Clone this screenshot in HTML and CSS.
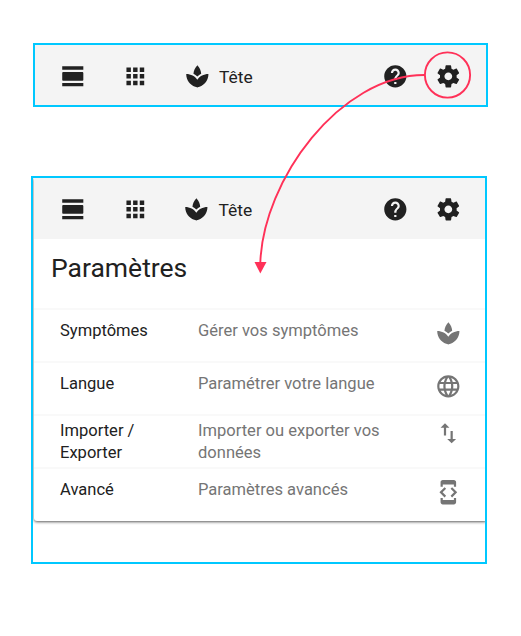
FILE: index.html
```html
<!DOCTYPE html>
<html lang="fr">
<head>
<meta charset="utf-8">
<title>Paramètres</title>
<link rel="stylesheet" href="styles.css">
</head>
<body>
<svg class="sprite" aria-hidden="true">
  <symbol id="day" viewBox="0 0 24 24"><path d="M2 21h19v-3H2v3zM20 8H3c-.55 0-1 .45-1 1v6c0 .55.45 1 1 1h17c.55 0 1-.45 1-1V9c0-.55-.45-1-1-1zM2 3v3h19V3H2z"/></symbol>
  <symbol id="apps" viewBox="0 0 24 24"><path d="M4 8h4V4H4v4zm6 12h4v-4h-4v4zm-6 0h4v-4H4v4zm0-6h4v-4H4v4zm6 0h4v-4h-4v4zm6-10v4h4V4h-4zm-6 4h4V4h-4v4zm6 6h4v-4h-4v4zm0 6h4v-4h-4v4z"/></symbol>
  <symbol id="spa" viewBox="0 0 24 24"><path d="M15.49 9.63c-.18-2.79-1.31-5.51-3.43-7.63-2.14 2.14-3.32 4.86-3.55 7.63 1.28.68 2.46 1.56 3.49 2.63 1.03-1.06 2.21-1.94 3.49-2.63zM12 15.1C9.85 12 6.18 10 2 10c0 5.32 3.36 9.82 8.03 11.49.63.23 1.29.4 1.97.51.68-.12 1.33-.29 1.97-.51C18.64 19.82 22 15.32 22 10c-4.18 0-7.85 2-10 5.1z"/></symbol>
  <symbol id="help" viewBox="0 0 24 24"><path d="M12 2C6.48 2 2 6.48 2 12s4.48 10 10 10 10-4.48 10-10S17.52 2 12 2zm1 17h-2v-2h2v2zm2.07-7.75l-.9.92C13.45 12.9 13 13.5 13 15h-2v-.5c0-1.1.45-2.1 1.17-2.83l1.24-1.26c.37-.36.59-.86.59-1.41 0-1.1-.9-2-2-2s-2 .9-2 2H8c0-2.21 1.79-4 4-4s4 1.79 4 4c0 .88-.36 1.68-.93 2.25z"/></symbol>
  <symbol id="gear" viewBox="0 0 24 24"><path d="M19.43 12.98c.04-.32.07-.64.07-.98s-.03-.66-.07-.98l2.11-1.65c.19-.15.24-.42.12-.64l-2-3.46c-.12-.22-.39-.3-.61-.22l-2.49 1c-.52-.4-1.08-.73-1.69-.98l-.38-2.65C14.46 2.18 14.25 2 14 2h-4c-.25 0-.46.18-.49.42l-.38 2.65c-.61.25-1.17.59-1.69.98l-2.49-1c-.23-.09-.49 0-.61.22l-2 3.46c-.13.22-.07.49.12.64l2.11 1.65c-.04.32-.07.65-.07.98s.03.66.07.98l-2.11 1.65c-.19.15-.24.42-.12.64l2 3.46c.12.22.39.3.61.22l2.49-1c.52.4 1.08.73 1.69.98l.38 2.65c.03.24.24.42.49.42h4c.25 0 .46-.18.49-.42l.38-2.65c.61-.25 1.17-.59 1.69-.98l2.49 1c.23.09.49 0 .61-.22l2-3.46c.12-.22.07-.49-.12-.64l-2.11-1.65zM12 15.5c-1.93 0-3.5-1.57-3.5-3.5s1.57-3.5 3.5-3.5 3.5 1.57 3.5 3.5-1.57 3.5-3.5 3.5z"/></symbol>
  <symbol id="globe" viewBox="0 0 24 24"><path d="M11.99 2C6.47 2 2 6.48 2 12s4.47 10 9.99 10C17.52 22 22 17.52 22 12S17.52 2 11.99 2zm6.93 6h-2.95c-.32-1.25-.78-2.45-1.38-3.56 1.84.63 3.37 1.91 4.33 3.56zM12 4.04c.83 1.2 1.48 2.53 1.91 3.96h-3.82c.43-1.43 1.08-2.76 1.91-3.96zM4.26 14C4.1 13.36 4 12.69 4 12s.1-1.36.26-2h3.38c-.08.66-.14 1.32-.14 2 0 .68.06 1.34.14 2H4.26zm.82 2h2.95c.32 1.25.78 2.45 1.38 3.56-1.84-.63-3.37-1.9-4.33-3.56zm2.95-8H5.08c.96-1.66 2.49-2.93 4.33-3.56C8.81 5.55 8.35 6.75 8.03 8zM12 19.96c-.83-1.2-1.48-2.53-1.91-3.96h3.82c-.43 1.43-1.08 2.76-1.91 3.96zM14.34 14H9.66c-.09-.66-.16-1.32-.16-2 0-.68.07-1.35.16-2h4.68c.09.65.16 1.32.16 2 0 .68-.07 1.34-.16 2zm.25 5.56c.6-1.11 1.06-2.31 1.38-3.56h2.95c-.96 1.65-2.49 2.93-4.33 3.56zM16.36 14c.08-.66.14-1.32.14-2 0-.68-.06-1.34-.14-2h3.38c.16.64.26 1.31.26 2s-.1 1.36-.26 2h-3.38z"/></symbol>
  <symbol id="transfer" viewBox="0 0 24 24"><path d="M9 3L5 6.99h3V14h2V6.99h3L9 3zm7 14.01V10h-2v7.01h-3L15 21l4-3.99h-3z"/></symbol>
  <symbol id="dev" viewBox="0 0 24 24"><path d="M7 5h10v2h2V3c0-1.1-.9-1.99-2-1.99L7 1c-1.1 0-2 .9-2 2v4h2V5zm8.41 11.59L20 12l-4.59-4.59L14 8.83 17.17 12 14 15.17l1.41 1.42zM10 15.17L6.83 12 10 8.83 8.59 7.41 4 12l4.59 4.59L10 15.17zM17 19H7v-2H5v4c0 1.1.9 2 2 2h10c1.1 0 2-.9 2-2v-4h-2v2z"/></symbol>
</svg>

<section class="frame frame-bar">
  <header class="toolbar">
    <svg class="icon"><use href="#day"/></svg>
    <svg class="icon"><use href="#apps"/></svg>
    <span class="zone"><svg class="icon"><use href="#spa"/></svg><span>Tête</span></span>
    <svg class="icon"><use href="#help"/></svg>
    <svg class="icon"><use href="#gear"/></svg>
  </header>
</section>

<section class="frame frame-page">
  <div class="card">
    <header class="toolbar">
      <svg class="icon"><use href="#day"/></svg>
      <svg class="icon"><use href="#apps"/></svg>
      <span class="zone"><svg class="icon"><use href="#spa"/></svg><span>Tête</span></span>
      <svg class="icon"><use href="#help"/></svg>
      <svg class="icon"><use href="#gear"/></svg>
    </header>
    <h1>Paramètres</h1>
    <div class="row"><span>Symptômes</span><span class="desc">Gérer vos symptômes</span><svg class="icon"><use href="#spa"/></svg></div>
    <div class="row"><span>Langue</span><span class="desc">Paramétrer votre langue</span><svg class="icon"><use href="#globe"/></svg></div>
    <div class="row row-tall"><span>Importer / Exporter</span><span class="desc">Importer ou exporter vos données</span><svg class="icon"><use href="#transfer"/></svg></div>
    <div class="row"><span>Avancé</span><span class="desc">Paramètres avancés</span><svg class="icon"><use href="#dev"/></svg></div>
  </div>
</section>

<svg class="callout" viewBox="0 0 521 636" aria-hidden="true">
  <circle cx="447.5" cy="75" r="22.6"/>
  <path d="M424.5 75C340 75 263 180 260.3 263"/>
  <polygon points="254.5,262 266.5,262 260.3,273.5"/>
</svg>
</body>
</html>
```
FILE: styles.css
```css
* { box-sizing: border-box; }

body {
  position: relative;
  width: 521px;
  height: 636px;
  margin: 0;
  padding: 43px 0 0 31px;
  background: #fff;
  color: #212121;
  font-family: Roboto, "Liberation Sans", sans-serif;
  font-size: 16.54px;
  line-height: 22px;
  overflow: hidden;
}

.sprite { display: none; }

.frame { border: 2px solid #00c8ff; }

.frame-bar {
  width: 455px;
  height: 64px;
  margin-left: 2px;
  background: #f4f4f4;
}

.frame-page {
  width: 456px;
  height: 388px;
  margin-top: 69px;
  padding-left: 1px;
  overflow: hidden;
}

.icon {
  display: block;
  flex: none;
  width: 26.67px;
  height: 26.67px;
  fill: currentColor;
}

.toolbar {
  display: grid;
  grid-template-columns: 62.2px 61.5px 198.4px 52.7px 27px;
  align-items: center;
  height: 60px;
  padding: 2px 0 0 25.3px;
}

.card .toolbar {
  height: 61px;
  padding: 1px 0 0 25.8px;
  background: #f4f4f4;
}

.zone {
  display: flex;
  align-items: center;
  gap: 8.3px;
  font-size: 17.4px;
}

.zone span { padding-top: 2px; }

.card .zone span { padding-top: 2px; }

.card {
  height: 343px;
  margin-right: -2px;
  border-radius: 0 0 3px 3px;
  box-shadow: 0 1px 3px rgba(0, 0, 0, .65);
}

h1 {
  height: 69px;
  margin: 0;
  padding: 13px 0 0 17px;
  font-size: 26.5px;
  font-weight: 400;
  line-height: 32px;
}

.row {
  display: grid;
  grid-template-columns: 100px 200px 27px;
  column-gap: 38px;
  height: 53px;
  padding: 10px 0 0 26px;
  border-top: 2px solid #f9f9f9;
}

.row-tall { padding-top: 4px; }

.desc { color: #757575; }

.row .icon { color: #757575; margin-left: -1.3px; }

.callout {
  position: absolute;
  top: 0;
  left: 0;
  width: 521px;
  height: 636px;
  fill: none;
  stroke: #ff3158;
  stroke-width: 1.9;
}

.callout polygon {
  fill: #ff3158;
  stroke: none;
}
```
